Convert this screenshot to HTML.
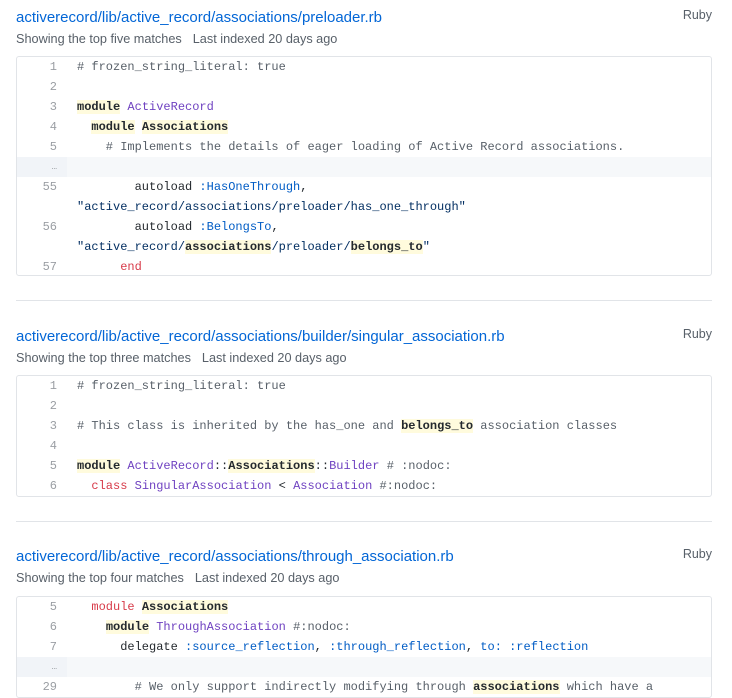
<!DOCTYPE html>
<html><head><meta charset="utf-8"><style>
body{margin:0;background:#fff;font-family:"Liberation Sans",sans-serif;width:732px;height:686px;overflow:hidden;position:relative}
.r{position:absolute;left:16px;width:696px}
.t{height:20px;line-height:20px;font-size:15px;color:#0366d6;position:relative;top:1px}
.lang{position:absolute;right:0;top:-3px;font-size:12.5px;color:#586069}
.m{font-size:12.7px;color:#586069;line-height:20px;height:20px;margin-top:2px}
.m span{margin-left:11px}
.box{position:absolute;left:0;width:694px;border:1px solid #e1e4e8;border-radius:3px;overflow:hidden}
.row{display:flex;height:20px;line-height:20px;font-family:"Liberation Mono",monospace;font-size:12px;color:#24292e}
.n{width:40px;padding-right:10px;text-align:right;color:#9a9ea3;flex:none}
.c{padding-left:10px;white-space:pre}
.e{background:#f6f8fa}
.e .n{background:#f1f4f8;font-size:9px}
.h{background:#fffbdd;font-weight:bold;color:#24292e}
.k{color:#d73a49}.p{color:#6f42c1}.b{color:#005cc5}.s{color:#032f62}.g{color:#586069}
.sep{position:absolute;left:16px;width:696px;border-top:1px solid #e1e4e8}
</style></head><body>

<div class="r" style="top:7px">
<div class="t">activerecord/lib/active_record/associations/preloader.rb<span class="lang">Ruby</span></div>
<div class="m">Showing the top five matches<span>Last indexed 20 days ago</span></div>
<div class="box" style="top:49px">
<div class="row"><div class="n">1</div><div class="c g"># frozen_string_literal: true</div></div>
<div class="row"><div class="n">2</div><div class="c"></div></div>
<div class="row"><div class="n">3</div><div class="c"><span class="h">module</span> <span class="p">ActiveRecord</span></div></div>
<div class="row"><div class="n">4</div><div class="c">  <span class="h">module</span> <span class="h">Associations</span></div></div>
<div class="row"><div class="n">5</div><div class="c g">    # Implements the details of eager loading of Active Record associations.</div></div>
<div class="row e"><div class="n">…</div><div class="c"></div></div>
<div class="row"><div class="n">55</div><div class="c">        autoload <span class="b">:HasOneThrough</span>,</div></div>
<div class="row"><div class="n"></div><div class="c s">"active_record/associations/preloader/has_one_through"</div></div>
<div class="row"><div class="n">56</div><div class="c">        autoload <span class="b">:BelongsTo</span>,</div></div>
<div class="row"><div class="n"></div><div class="c s">"active_record/<span class="h">associations</span>/preloader/<span class="h">belongs_to</span>"</div></div>
<div class="row" style="height:18px"><div class="n">57</div><div class="c">      <span class="k">end</span></div></div>
</div></div>

<div class="sep" style="top:300px"></div>

<div class="r" style="top:326px">
<div class="t">activerecord/lib/active_record/associations/builder/singular_association.rb<span class="lang">Ruby</span></div>
<div class="m">Showing the top three matches<span>Last indexed 20 days ago</span></div>
<div class="box" style="top:49px">
<div class="row"><div class="n">1</div><div class="c g"># frozen_string_literal: true</div></div>
<div class="row"><div class="n">2</div><div class="c"></div></div>
<div class="row"><div class="n">3</div><div class="c g"># This class is inherited by the has_one and <span class="h">belongs_to</span> association classes</div></div>
<div class="row"><div class="n">4</div><div class="c"></div></div>
<div class="row"><div class="n">5</div><div class="c"><span class="h">module</span> <span class="p">ActiveRecord</span>::<span class="h">Associations</span>::<span class="p">Builder</span> <span class="g"># :nodoc:</span></div></div>
<div class="row"><div class="n">6</div><div class="c">  <span class="k">class</span> <span class="p">SingularAssociation</span> &lt; <span class="p">Association</span> <span class="g">#:nodoc:</span></div></div>
</div></div>

<div class="sep" style="top:521px"></div>

<div class="r" style="top:546px">
<div class="t">activerecord/lib/active_record/associations/through_association.rb<span class="lang">Ruby</span></div>
<div class="m">Showing the top four matches<span>Last indexed 20 days ago</span></div>
<div class="box" style="top:50px">
<div class="row"><div class="n">5</div><div class="c">  <span class="k">module</span> <span class="h">Associations</span></div></div>
<div class="row"><div class="n">6</div><div class="c">    <span class="h">module</span> <span class="p">ThroughAssociation</span> <span class="g">#:nodoc:</span></div></div>
<div class="row"><div class="n">7</div><div class="c">      delegate <span class="b">:source_reflection</span>, <span class="b">:through_reflection</span>, <span class="b">to:</span> <span class="b">:reflection</span></div></div>
<div class="row e"><div class="n">…</div><div class="c"></div></div>
<div class="row"><div class="n">29</div><div class="c g">        # We only support indirectly modifying through <span class="h">associations</span> which have a</div></div>
</div></div>

</body></html>
